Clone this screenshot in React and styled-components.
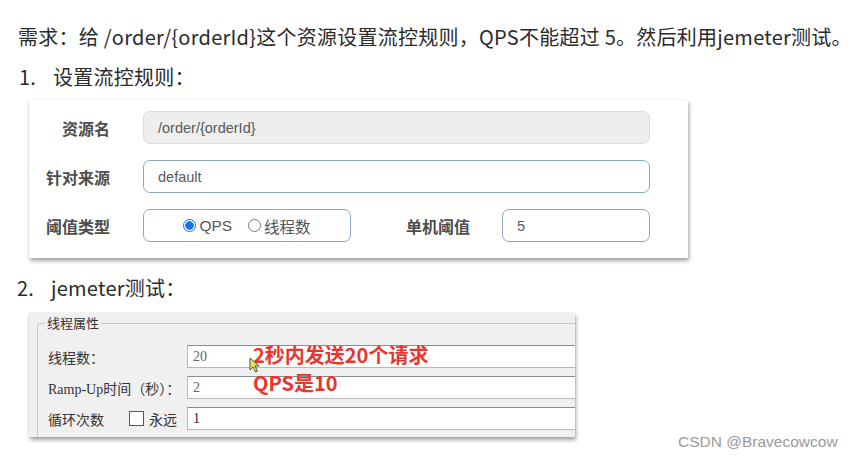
import React from 'react'
import styled, {createGlobalStyle} from 'styled-components'

const Global = createGlobalStyle`
	html, body {
		margin: 0;
		padding: 0;
		background: #fff;
	}
	body {
		font-family: "Noto Sans CJK SC", "Noto Sans", sans-serif;
		color: #333;
	}
`
const Page = styled.div`
	position: relative;
	width: 854px;
	height: 458px;
	overflow: hidden;
	padding-top: 23px;
	box-sizing: border-box;
`
const Line = styled.p`
	margin: ${p => p.$top || 0}px 0 0 ${p => p.$left || 18}px;
	font-size: 20px;
	line-height: 28px;
	color: #2b2b2b;
	white-space: nowrap;
	letter-spacing: 0.25px;
`
const Num = styled.span`
	display: inline-block;
	width: 34px;
`
const RulePanel = styled.div`
	margin: 9px 0 0 29px;
	width: 659px;
	height: 158px;
	box-sizing: border-box;
	padding-top: 11px;
	background: #fff;
	box-shadow: 0 0 2px rgba(0,0,0,0.08), 1px 3px 4px rgba(0,0,0,0.35);
	display: flex;
	flex-direction: column;
	gap: 16px;
`
const FormRow = styled.div`
	display: flex;
	align-items: center;
	height: 33px;
`
const Label = styled.label`
	width: ${p => p.$w || 81}px;
	margin-right: ${p => p.$mr || 33}px;
	text-align: right;
	font-size: 16px;
	font-weight: 700;
	color: #4d4d4d;
	flex-shrink: 0;
`
const Field = styled.div`
	width: ${p => p.$w}px;
	height: 33px;
	box-sizing: border-box;
	border: 1px solid ${p => p.$disabled ? '#dcdcdc' : '#8ea6c6'};
	background: ${p => p.$disabled ? '#eeeeee' : '#fff'};
	border-radius: 7px;
	padding-left: ${p => p.$center ? 0 : 14}px;
	display: flex;
	align-items: center;
	justify-content: ${p => p.$center ? 'center' : 'flex-start'};
	font-family: "Liberation Sans", Arial, sans-serif;
	font-size: 14.5px;
	color: #5a5a5a;
	flex-shrink: 0;
`
const Radio = styled.span`
	display: inline-block;
	width: 13px;
	height: 13px;
	border-radius: 50%;
	box-sizing: border-box;
	border: 1px solid ${p => p.$on ? '#1a73e8' : '#777'};
	background: ${p => p.$on ? 'radial-gradient(circle, #1a73e8 0 4px, #fff 4.5px)' : '#fff'};
	margin-right: 3px;
	margin-left: ${p => p.$ml || 0}px;
	flex-shrink: 0;
`
const RadioText = styled.span`
	font-family: "Liberation Sans", "Noto Sans CJK SC", sans-serif;
	font-size: 15.5px;
	color: #555;
`
const ThreadPanel = styled.div`
	margin: 11px 0 0 29px;
	width: 546px;
	height: 124px;
	background: #f0f0f0;
	box-shadow: 0 0 2px rgba(0,0,0,0.1), 1px 3px 4px rgba(0,0,0,0.35);
	overflow: hidden;
	padding: 3px 0 0 8px;
	box-sizing: border-box;
`
const Fieldset = styled.fieldset`
	margin: 0;
	padding: 15px 0 0 10px;
	width: 560px;
	height: 150px;
	box-sizing: border-box;
	border: none;
	border-top: 1px solid #c8c8c8;
	border-left: 1px solid #c8c8c8;
	border-radius: 3px 0 0 0;
	display: flex;
	flex-direction: column;
	gap: 8px;
	font-family: "Liberation Serif", "Noto Sans CJK SC", serif;
`
const Legend = styled.legend`
	padding: 0 2px;
	margin-left: -3px;
	font-family: "Noto Sans CJK SC", sans-serif;
	font-size: 13px;
	line-height: 14px;
	color: #333;
`
const ThreadRow = styled.div`
	display: flex;
	align-items: center;
	height: 23px;
`
const ThreadLabel = styled.span`
	width: 139px;
	font-size: 14px;
	color: #333;
	flex-shrink: 0;
	white-space: nowrap;
	display: flex;
	align-items: center;
`
const CheckBox = styled.span`
	display: inline-block;
	width: 15px;
	height: 15px;
	box-sizing: border-box;
	border: 1px solid #555;
	background: #fff;
	margin: 0 5px 0 25px;
	flex-shrink: 0;
`
const ThreadInput = styled.div`
	width: 400px;
	height: 23px;
	box-sizing: border-box;
	background: #fff;
	border: 1px solid #b8b8b8;
	border-top-color: #8c8c8c;
	padding-left: 5px;
	display: flex;
	align-items: center;
	font-family: "Liberation Serif", serif;
	font-size: 14px;
	color: ${p => p.$dark ? '#222' : '#666'};
`
const Note = styled.div`
	position: absolute;
	left: 253px;
	top: 341px;
	font-family: "Noto Sans CJK SC", sans-serif;
	font-weight: 700;
	font-size: 20px;
	line-height: 28px;
	color: #e8352f;
	white-space: nowrap;
`
const Cursor = styled.svg`
	position: absolute;
	left: 249px;
	top: 357px;
`
const Watermark = styled.div`
	position: absolute;
	left: 678px;
	top: 432px;
	font-family: "Liberation Sans", Arial, sans-serif;
	font-size: 15.5px;
	line-height: 20px;
	color: #9a9a9a;
`

export default function App() {
	return (
		<>
			<Global />
			<Page>
				<Line>需求：给 /order/{'{orderId}'}这个资源设置流控规则，QPS不能超过 5。然后利用jemeter测试。</Line>
				<Line $top={12} $left={19}><Num>1.</Num>设置流控规则：</Line>
				<RulePanel>
					<FormRow>
						<Label>资源名</Label>
						<Field $w={507} $disabled>/order/{'{orderId}'}</Field>
					</FormRow>
					<FormRow>
						<Label>针对来源</Label>
						<Field $w={507}>default</Field>
					</FormRow>
					<FormRow>
						<Label>阈值类型</Label>
						<Field $w={208} $center>
							<Radio $on />
							<RadioText>QPS</RadioText>
							<Radio $ml={16} />
							<RadioText>线程数</RadioText>
						</Field>
						<Label $w={119} $mr={32}>单机阈值</Label>
						<Field $w={148}>5</Field>
					</FormRow>
				</RulePanel>
				<Line $top={16} $left={17}><Num>2.</Num>jemeter测试：</Line>
				<ThreadPanel>
					<Fieldset>
						<Legend>线程属性</Legend>
						<ThreadRow>
							<ThreadLabel>线程数：</ThreadLabel>
							<ThreadInput>20</ThreadInput>
						</ThreadRow>
						<ThreadRow>
							<ThreadLabel>Ramp-Up时间（秒）：</ThreadLabel>
							<ThreadInput>2</ThreadInput>
						</ThreadRow>
						<ThreadRow>
							<ThreadLabel>循环次数<CheckBox /><span>永远</span></ThreadLabel>
							<ThreadInput $dark>1</ThreadInput>
						</ThreadRow>
					</Fieldset>
				</ThreadPanel>
				<Note>2秒内发送20个请求<br />QPS是10</Note>
				<Cursor width="11" height="16" viewBox="0 0 11 16">
					<path d="M1 1 L1 13 L4 10 L6.5 15 L8.5 14 L6 9 L10 9 Z" fill="#e6e24a" stroke="#555" strokeWidth="1" strokeLinejoin="round" />
				</Cursor>
				<Watermark>CSDN @Bravecowcow</Watermark>
			</Page>
		</>
	)
}
